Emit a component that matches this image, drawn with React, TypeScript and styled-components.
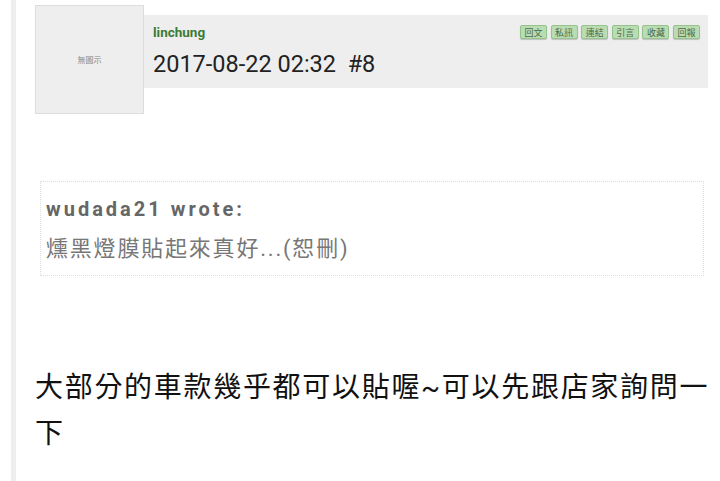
import React from 'react';
import styled, { createGlobalStyle } from 'styled-components';

const GlobalStyle = createGlobalStyle`
    html, body {
        margin: 0;
        padding: 0;
        background: #ffffff;
    }
    body {
        font-family: Roboto, 'Noto Sans CJK TC', sans-serif;
    }
`

const actions = ['回文', '私訊', '連結', '引言', '收藏', '回報'];

const App = () => {
    return (
        <>
            <GlobalStyle />
            <Page>
                <SideRule />
                <Post>
                    <PostHead>
                        <Avatar>無圖示</Avatar>
                        <InfoBar>
                            <InfoTop>
                                <Author>linchung</Author>
                                <Actions>
                                    {actions.map((a) => (
                                        <ActionButton key={a}>{a}</ActionButton>
                                    ))}
                                </Actions>
                            </InfoTop>
                            <PostDate>2017-08-22 02:32&nbsp;&nbsp;#8</PostDate>
                        </InfoBar>
                    </PostHead>
                    <Quote>
                        <QuoteAuthor>wudada21 wrote:</QuoteAuthor>
                        <QuoteText>燻黑燈膜貼起來真好...(恕刪)</QuoteText>
                    </Quote>
                    <Body>大部分的車款幾乎都可以貼喔~可以先跟店家詢問一下</Body>
                </Post>
            </Page>
        </>
    )
}

export default App;

const Page = styled.div`
    display: flex;
    flex-direction: row;
    width: 720px;
    height: 481px;
    overflow: hidden;
    padding-left: 11px;
    box-sizing: border-box;
`
const SideRule = styled.div`
    width: 5px;
    flex-shrink: 0;
    background: #eeeeee;
`
const Post = styled.div`
    flex: 1;
    display: flex;
    flex-direction: column;
    padding: 5px 12px 0 19px;
`
const PostHead = styled.div`
    display: flex;
    flex-direction: row;
    align-items: flex-start;
`
const Avatar = styled.div`
    width: 107px;
    height: 107px;
    flex-shrink: 0;
    background: #eeeeee;
    border: 1px solid #dddddd;
    display: flex;
    align-items: center;
    justify-content: center;
    font-size: 8px;
    color: #888888;
`
const InfoBar = styled.div`
    flex: 1;
    margin-top: 10px;
    height: 73px;
    background: #eeeeee;
    padding: 9px 8px 0 9px;
    box-sizing: border-box;
`
const InfoTop = styled.div`
    display: flex;
    flex-direction: row;
    justify-content: space-between;
    align-items: center;
`
const Author = styled.span`
    font-family: Roboto, sans-serif;
    font-size: 13.5px;
    font-weight: bold;
    color: #3b7b36;
    line-height: 16px;
`
const Actions = styled.div`
    display: flex;
    gap: 3.6px;
`
const ActionButton = styled.span`
    width: 27px;
    height: 14px;
    box-sizing: border-box;
    display: flex;
    align-items: center;
    justify-content: center;
    background: #b9dcb2;
    border: 1px solid #94c38c;
    border-radius: 2px;
    box-shadow: 0 1px 1px rgba(0, 0, 0, 0.2);
    font-size: 9px;
    color: #4c6a48;
`
const PostDate = styled.div`
    margin-top: 10px;
    font-size: 23.5px;
    color: #222222;
    line-height: 28px;
`
const Quote = styled.div`
    margin: 67px 4px 0 5px;
    border: 1px dotted #dddddd;
    padding: 13px 5px 12px 5px;
`
const QuoteAuthor = styled.div`
    font-size: 20px;
    font-weight: bold;
    color: #666666;
    letter-spacing: 3px;
    line-height: 28px;
`
const QuoteText = styled.div`
    margin-top: 12px;
    font-size: 22px;
    color: #777777;
    letter-spacing: 1.8px;
    line-height: 28px;
`
const Body = styled.div`
    margin-top: 89px;
    margin-right: -8px;
    font-size: 28px;
    letter-spacing: 1.7px;
    line-height: 46px;
    color: #111111;
`
